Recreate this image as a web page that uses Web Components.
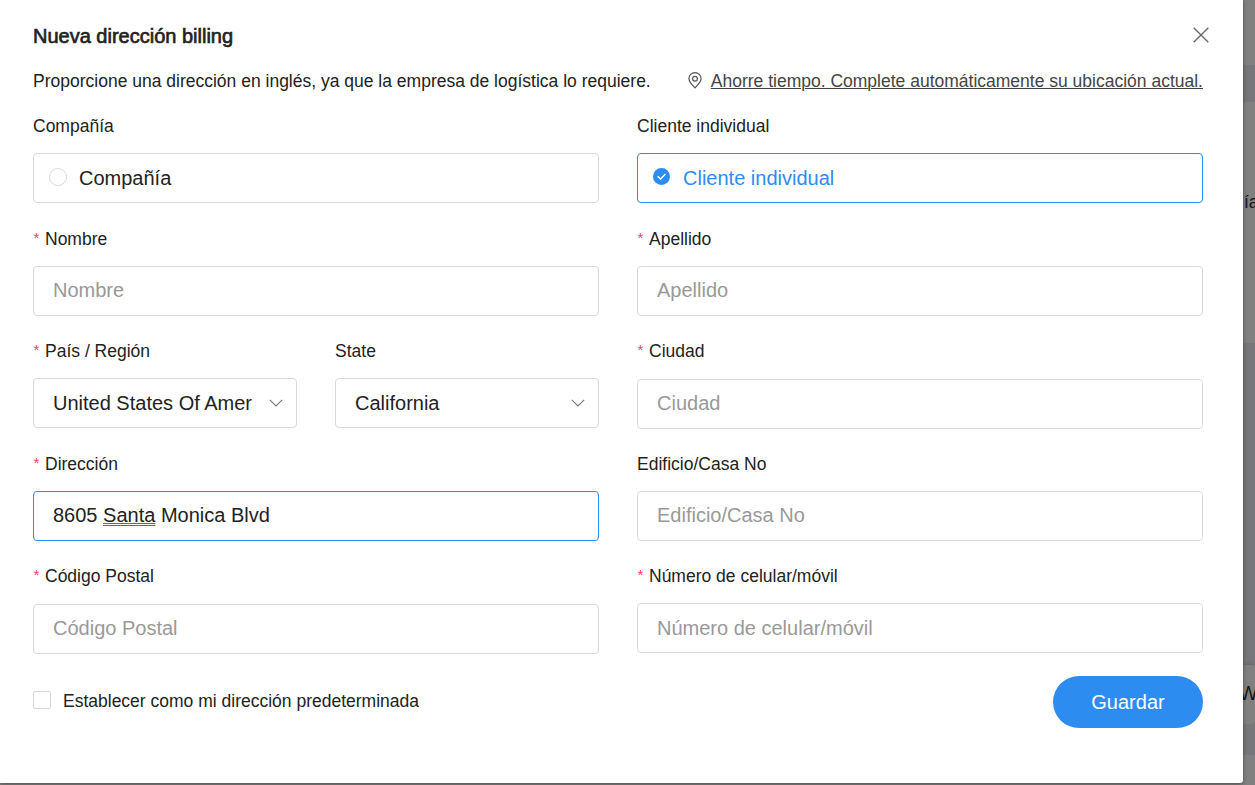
<!DOCTYPE html>
<html lang="es">
<head>
<meta charset="utf-8">
<title>Nueva dirección billing</title>
<style>
html,body{margin:0;height:100%;overflow:hidden}
body{font-family:"Liberation Sans",Arial,sans-serif;font-size:17.5px;line-height:26px;color:#222;background:#808080}
</style>
</head>
<body>
<address-page></address-page>
<script>
const define = (name, html, setup) => customElements.define(name, class extends HTMLElement {
  constructor() {
    super();
    const t = document.createElement('template');
    t.innerHTML = html;
    this.attachShadow({mode: 'open'}).append(t.content.cloneNode(true));
  }
  connectedCallback() { if (setup) setup(this, this.shadowRoot); }
});

define('close-icon', `<style>:host{display:block;width:16px;height:16px}svg{display:block}</style>
<svg width="16" height="16" viewBox="0 0 16 16"><path d="M.7.7 15.3 15.3M15.3.7.7 15.3" fill="none" stroke="#666" stroke-width="1.35"/></svg>`);

define('pin-icon', `<style>:host{display:block;width:14px;height:17px}svg{display:block}</style>
<svg width="14" height="17" viewBox="0 0 14 17" fill="none" stroke="#555" stroke-width="1.2"><path d="M7 15.9C4.2 12.9.9 9.8.9 6.7a6.1 6.1 0 0 1 12.2 0c0 3.1-3.3 6.2-6.1 9.2z"/><circle cx="7" cy="6.8" r="2.4"/></svg>`);

define('chevron-icon', `<style>:host{display:block;width:14px;height:8px}svg{display:block}</style>
<svg width="14" height="8" viewBox="0 0 14 8"><path d="M.8.8 7 7 13.2.8" fill="none" stroke="#777" stroke-width="1.1"/></svg>`);

define('form-field', `<style>
:host{display:flex;flex-direction:column;gap:14px;min-width:0}
:host([low]){gap:15px}
.label{display:flex;height:26px;white-space:nowrap}
i{display:none;font-style:normal;font-size:15px;line-height:24px;color:#ff3b6b;box-sizing:border-box;width:12px;padding-left:.6px}
:host([required]) i{display:block}
</style><div class="label"><i>*</i><span></span></div><slot></slot>`,
(el, root) => root.querySelector('span').textContent = el.getAttribute('label'));

define('text-box', `<style>
:host{display:flex;align-items:center;box-sizing:border-box;height:50px;border:1px solid #d9d9d9;border-radius:4px;padding:0 19px 2px;font-size:20px;white-space:pre;background:#fff}
:host([empty]){color:#999}
:host([down]){padding-bottom:0}
:host([active]){border-color:#2d8cf0}
::slotted(u){text-decoration:underline double #3f63e8 1px;text-underline-offset:1px;text-decoration-skip-ink:none}
</style><div><slot></slot></div>`);

define('select-box', `<style>
:host{display:flex;align-items:center;justify-content:space-between;box-sizing:border-box;height:50px;border:1px solid #d9d9d9;border-radius:4px;padding:0 13px 0 19px;font-size:20px;background:#fff}
div{width:200px;overflow:hidden;white-space:nowrap}
</style><div><slot></slot></div><chevron-icon></chevron-icon>`);

define('radio-box', `<style>
:host{display:flex;align-items:center;gap:12px;box-sizing:border-box;height:50px;border:1px solid #d9d9d9;border-radius:4px;padding:0 15px;font-size:20px}
svg{display:block;margin-top:-3px}
.on{display:none}
:host([checked]){border-color:#2d8cf0;color:#2d8cf0}
:host([checked]) .on{display:block}
:host([checked]) .off{display:none}
</style><svg width="18" height="18" viewBox="0 0 18 18"><circle class="off" cx="9" cy="9" r="8.5" fill="#fff" stroke="#d9d9d9"/><g class="on"><circle cx="8.5" cy="8.5" r="8.5" fill="#2d8cf0"/><path d="M4.6 8.3 7.6 11 12.4 6" fill="none" stroke="#fff" stroke-width="1.3"/></g></svg><slot></slot>`);

define('pill-button', `<style>
:host{display:flex;align-items:center;justify-content:center;width:150px;height:52px;border-radius:26px;background:#2d8cf0;color:#fff;font-size:20px}
</style><slot></slot>`);

define('check-option', `<style>
:host{display:flex;align-items:center;gap:12px}
span{box-sizing:border-box;width:18px;height:18px;border:1px solid #d9d9d9;border-radius:2px;margin-top:-2px}
</style><span></span><slot></slot>`);

define('page-backdrop', `<style>
:host{display:flex;flex-direction:column;overflow:hidden;color:#161616}
div{white-space:nowrap;box-sizing:border-box;flex:none}
.band{background:#75777a}
.text{padding:87px 0 0 1px}
.card{font-size:20px;line-height:56px;border-radius:3px;box-shadow:0 0 5px #0003}
.card span{margin-left:-4px}
</style>
<div style="height:65px"></div><div class="band" style="height:37px"></div>
<div class="text" style="height:241px">ía</div><div class="band" style="height:322px"></div>
<div class="card" style="height:59px;background:#808080"><span>W</span></div>
<div class="band" style="height:31px"></div><div style="height:30px"></div>`);

define('address-dialog', `<style>
:host{display:block;box-sizing:border-box;background:#fff;border-radius:0 0 3px 0;box-shadow:0 1px 4px #0006;padding:23px 40px 0 33px}
header{display:flex;justify-content:space-between;height:45px}
h1{margin:0;font-size:20px;line-height:26px;font-weight:400;-webkit-text-stroke:.65px #222}
close-icon{margin:4px -5.5px 0 0}
.intro{display:flex;justify-content:space-between;height:45px;white-space:nowrap}
.locate{display:flex;color:#444}
.locate pin-icon{margin:4px 9px 0 0}
.locate u{text-underline-offset:1px;text-decoration-thickness:1px}
.fields{display:grid;grid-template-columns:566px 566px;column-gap:38px;grid-template-rows:113px 112px 113px 112px 113px}
.pair{display:grid;grid-template-columns:1fr 1fr;column-gap:38px;align-items:start}
.fields>*{align-self:start}
footer{display:flex;justify-content:space-between;align-items:flex-start}
check-option{margin-top:12px}
</style>
<header><h1>Nueva dirección billing</h1><close-icon></close-icon></header>
<div class="intro"><span>Proporcione una dirección en inglés, ya que la empresa de logística lo requiere.</span><div class="locate"><pin-icon></pin-icon><u>Ahorre tiempo. Complete automáticamente su ubicación actual.</u></div></div>
<div class="fields">
<form-field label="Compañía"><radio-box>Compañía</radio-box></form-field>
<form-field label="Cliente individual"><radio-box checked>Cliente individual</radio-box></form-field>
<form-field required label="Nombre"><text-box empty>Nombre</text-box></form-field>
<form-field required label="Apellido"><text-box empty>Apellido</text-box></form-field>
<div class="pair"><form-field required label="País / Región"><select-box>United States Of America</select-box></form-field><form-field label="State"><select-box>California</select-box></form-field></div>
<form-field required low label="Ciudad"><text-box empty>Ciudad</text-box></form-field>
<form-field required label="Dirección"><text-box active>8605 <u>Santa</u> Monica Blvd</text-box></form-field>
<form-field label="Edificio/Casa No"><text-box empty>Edificio/Casa No</text-box></form-field>
<form-field required low label="Código Postal"><text-box empty>Código Postal</text-box></form-field>
<form-field required label="Número de celular/móvil"><text-box empty down>Número de celular/móvil</text-box></form-field>
</div>
<footer><check-option>Establecer como mi dirección predeterminada</check-option><pill-button>Guardar</pill-button></footer>`);

define('address-page', `<style>
:host{display:grid;grid-template-columns:1243px 12px;height:785px;overflow:hidden}
address-dialog{height:783px;z-index:1}
</style><address-dialog></address-dialog><page-backdrop></page-backdrop>`);
</script>
</body>
</html>
